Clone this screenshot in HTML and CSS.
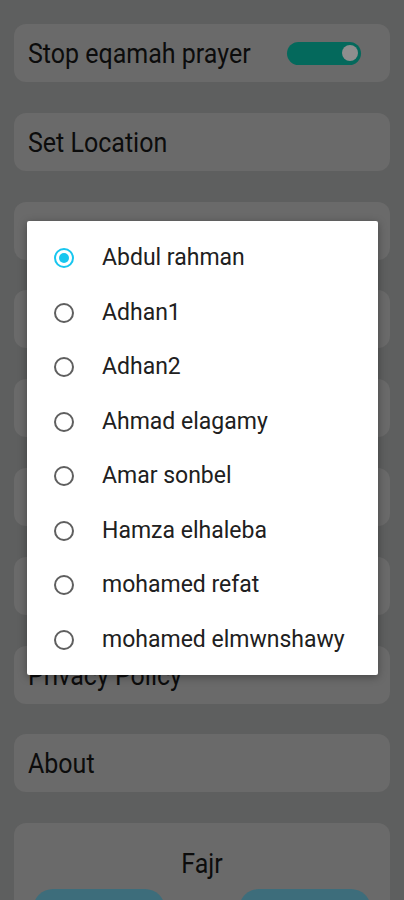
FILE: index.html
```html
<!DOCTYPE html>
<html>
<head>
<meta charset="utf-8">
<link rel="stylesheet" href="styles.css">
</head>
<body>
<div class="page">
  <div class="card">
    <span class="label">Stop eqamah prayer</span>
    <span class="switch"><span class="thumb"></span></span>
  </div>
  <div class="card"><span class="label">Set Location</span></div>
  <div class="card"></div>
  <div class="card"></div>
  <div class="card"></div>
  <div class="card"></div>
  <div class="card"></div>
  <div class="card"><span class="label">Privacy Policy</span></div>
  <div class="card"><span class="label">About</span></div>
  <div class="card prayer">
    <div class="prayer-title">Fajr</div>
    <div class="prayer-buttons">
      <span class="pbtn"></span>
      <span class="pbtn"></span>
    </div>
  </div>
</div>

<div class="dialog">
  <div class="option"><span class="radio checked"></span><span class="opt-text">Abdul rahman</span></div>
  <div class="option"><span class="radio"></span><span class="opt-text">Adhan1</span></div>
  <div class="option"><span class="radio"></span><span class="opt-text">Adhan2</span></div>
  <div class="option"><span class="radio"></span><span class="opt-text">Ahmad elagamy</span></div>
  <div class="option"><span class="radio"></span><span class="opt-text">Amar sonbel</span></div>
  <div class="option"><span class="radio"></span><span class="opt-text">Hamza elhaleba</span></div>
  <div class="option"><span class="radio"></span><span class="opt-text">mohamed refat</span></div>
  <div class="option"><span class="radio"></span><span class="opt-text">mohamed elmwnshawy</span></div>
</div>
</body>
</html>
```

FILE: styles.css
```css
html, body {
  margin: 0;
  padding: 0;
}
body {
  background: #5e5f5f;
  width: 404px;
  height: 900px;
  overflow: hidden;
  font-family: Roboto, "Liberation Sans", sans-serif;
  position: relative;
}
.page {
  padding: 24px 14px 0 14px;
  display: flex;
  flex-direction: column;
  gap: 30.8px;
}
.card {
  background: #6a6a6a;
  border-radius: 12px;
  height: 58px;
  display: flex;
  align-items: center;
  justify-content: space-between;
  padding: 0 14px;
  box-sizing: border-box;
  flex-shrink: 0;
}
.label {
  display: inline-block;
  font-size: 25px;
  color: #0c0c0c;
  line-height: 30px;
  padding-top: 2px;
  transform: scaleY(1.08);
}
.switch {
  width: 74px;
  height: 23px;
  border-radius: 12px;
  background: #04695c;
  display: flex;
  align-items: center;
  justify-content: flex-end;
  padding-right: 3px;
  box-sizing: border-box;
  margin-right: 15px;
}
.thumb {
  width: 16px;
  height: 16px;
  border-radius: 50%;
  background: #8e8e8e;
}
.card.prayer {
  height: 120px;
  flex-direction: column;
  justify-content: flex-start;
  align-items: stretch;
  padding: 27px 19px 0 19px;
}
.prayer-title {
  text-align: center;
  font-size: 25px;
  line-height: 28px;
  color: #0c0c0c;
  transform: scaleY(1.08);
}
.prayer-buttons {
  display: flex;
  justify-content: space-between;
  margin-top: 11px;
}
.pbtn {
  width: 132px;
  height: 40px;
  border-radius: 22px;
  background: #3d6d7b;
}
.dialog {
  position: absolute;
  left: 27px;
  top: 221px;
  width: 351px;
  height: 454px;
  box-sizing: border-box;
  background: #ffffff;
  border-radius: 2px;
  box-shadow: 0 2px 8px rgba(0,0,0,0.35);
  padding: 10px 0 8px 0;
}
.option {
  height: 54.5px;
  display: flex;
  align-items: center;
  padding-left: 27px;
}
.radio {
  width: 20px;
  height: 20px;
  box-sizing: border-box;
  border: 2px solid #5f5f5f;
  border-radius: 50%;
  margin-right: 28px;
  flex-shrink: 0;
  display: flex;
  align-items: center;
  justify-content: center;
}
.radio.checked {
  border-color: #18c6ef;
}
.radio.checked::after {
  content: "";
  width: 10px;
  height: 10px;
  border-radius: 50%;
  background: #18c6ef;
}
.opt-text {
  display: inline-block;
  font-size: 23px;
  color: #202020;
  line-height: 28px;
  transform: scaleY(1.06);
}
```
